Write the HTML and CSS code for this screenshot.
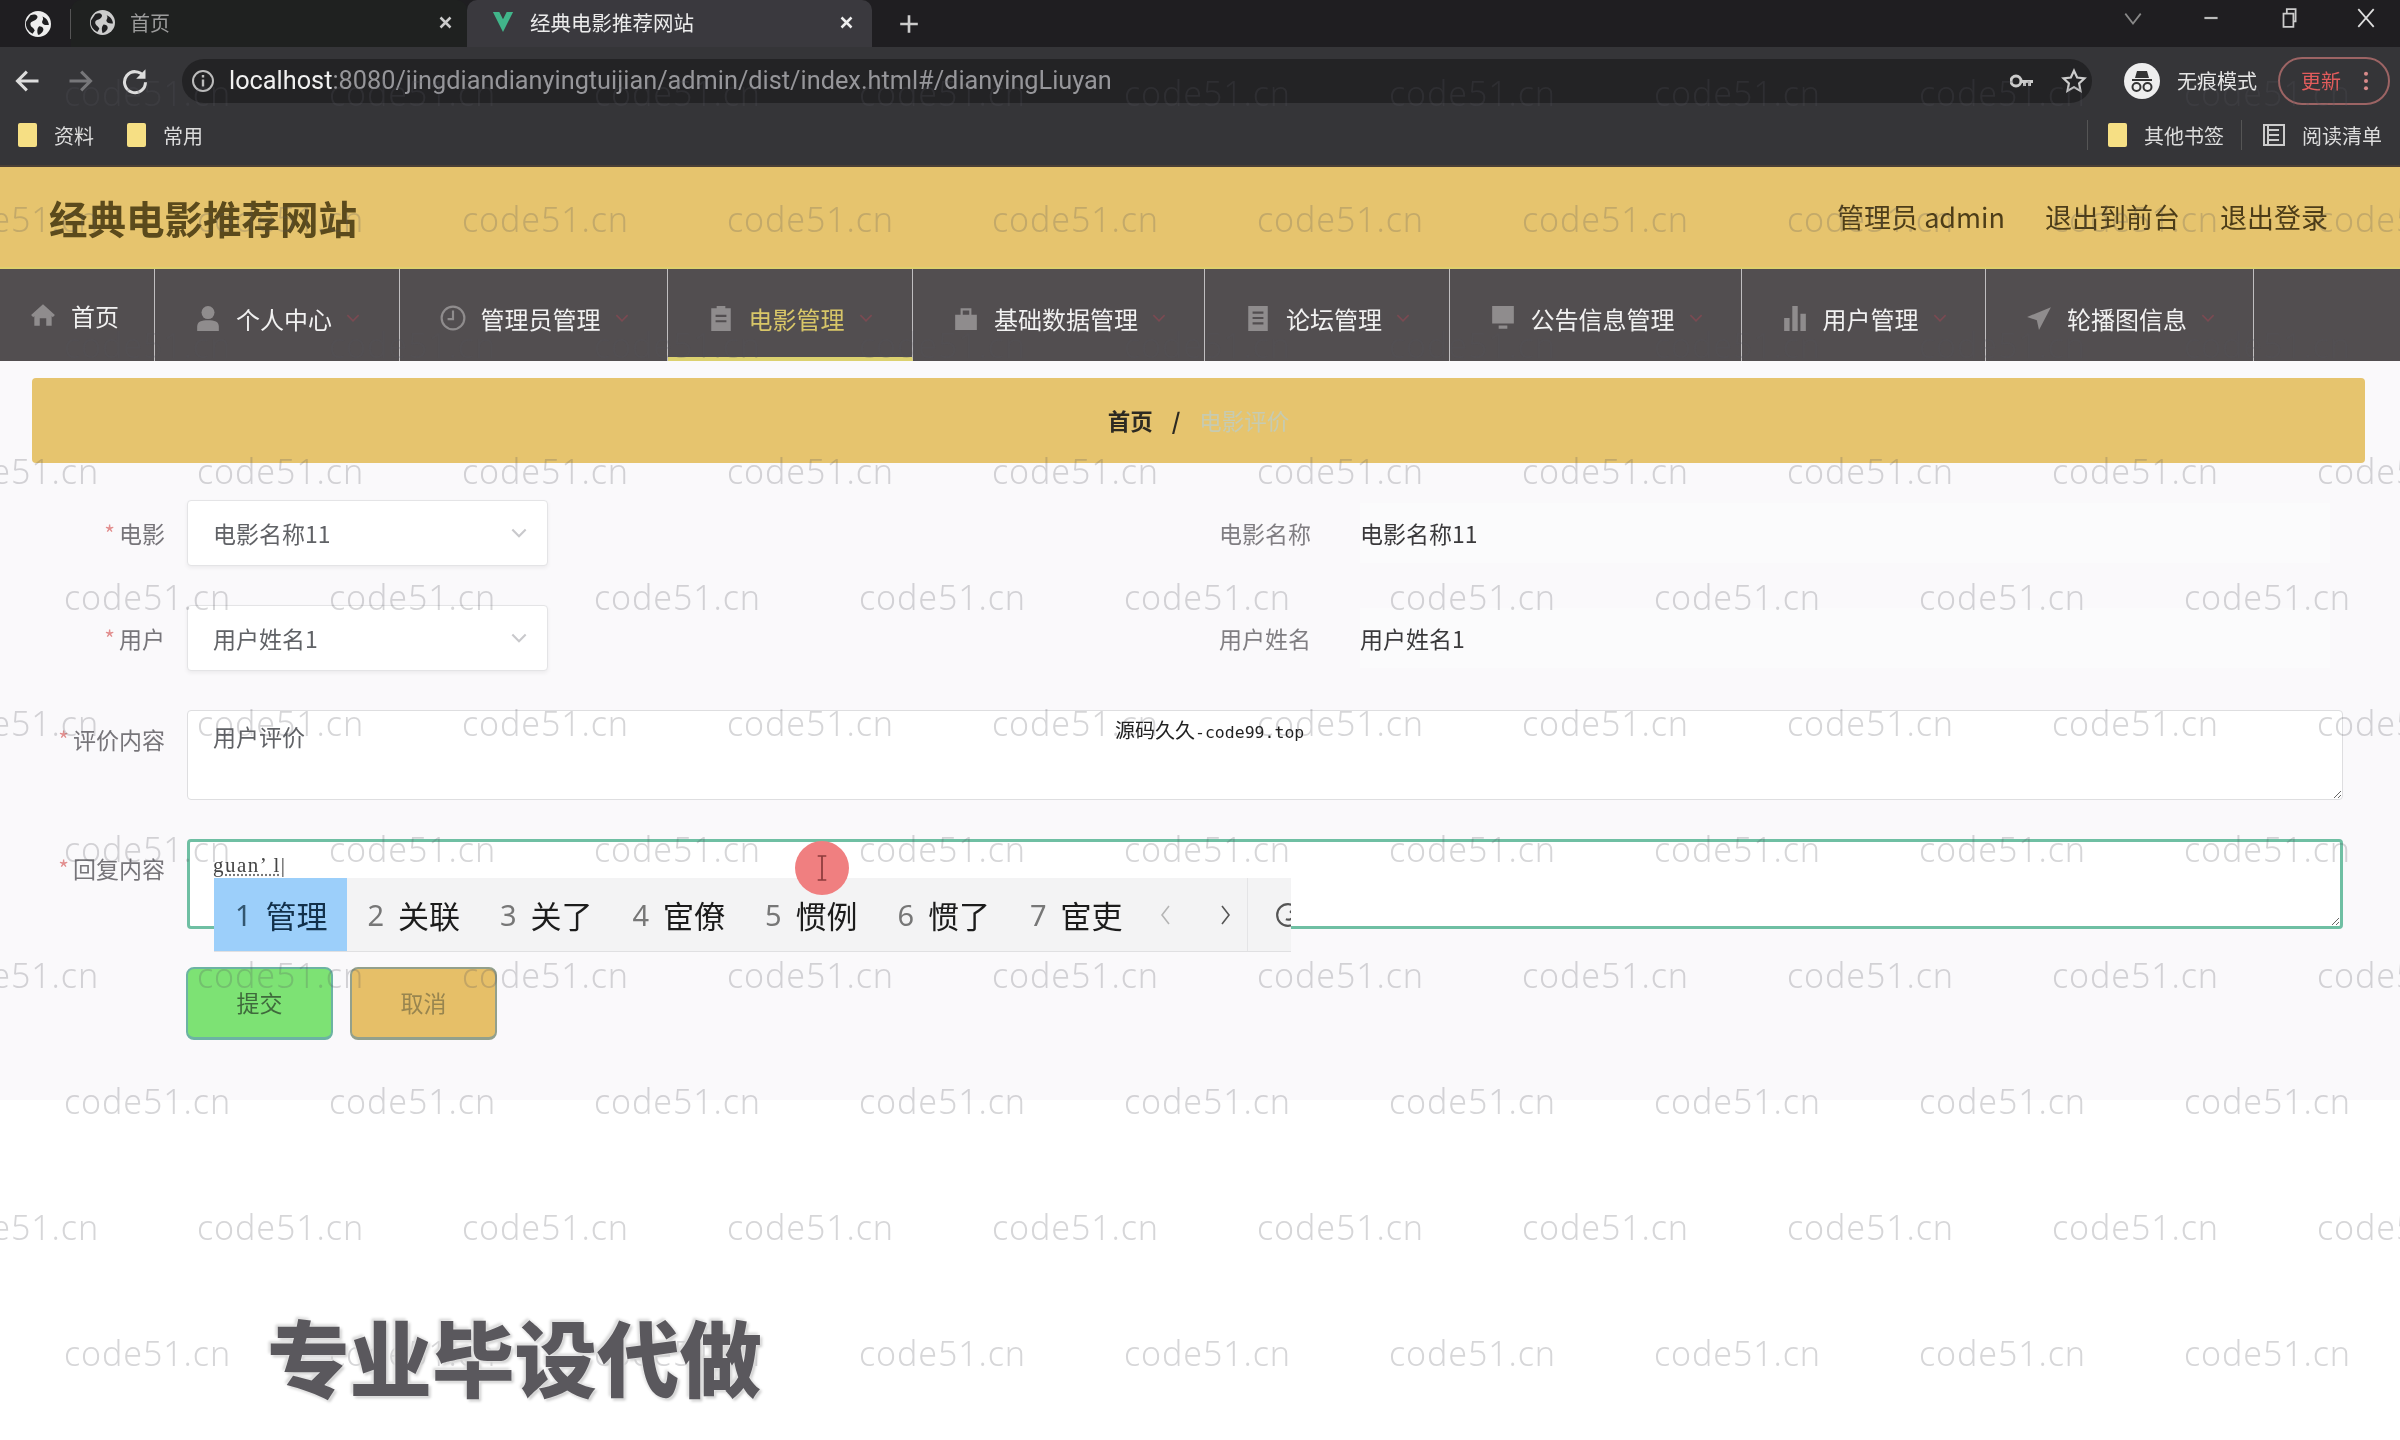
FILE: index.html
```html
<!DOCTYPE html>
<html lang="zh-CN">
<head>
<meta charset="utf-8">
<title>经典电影推荐网站</title>
<link rel="stylesheet" href="styles.css">
</head>
<body>
<div class="page">

  <!-- browser chrome -->
  <div class="tabbar">
    <svg class="globe" viewBox="0 0 24 24"><circle cx="12" cy="12" r="12" fill="#eee"/><path d="M5 4c4-2 8 0 6 3s-6 2-6 5 3 3 4 6l-2 3C3 19 0 15 1 10z M16 5c3 1 6 4 6 8-2 0-5 0-6-2s2-3 0-6z M13 14c2 0 4 1 4 3s-3 5-5 5c-1-3-1-6 1-8z" fill="#1f1f21"/></svg>
    <span class="tab-sep"></span>
    <div class="tab">
      <svg class="globe small" viewBox="0 0 24 24"><circle cx="12" cy="12" r="12" fill="#ccc"/><path d="M5 4c4-2 8 0 6 3s-6 2-6 5 3 3 4 6l-2 3C3 19 0 15 1 10z M16 5c3 1 6 4 6 8-2 0-5 0-6-2s2-3 0-6z M13 14c2 0 4 1 4 3s-3 5-5 5c-1-3-1-6 1-8z" fill="#1f1f21"/></svg>
      <span class="tab-title">首页</span>
      <svg class="tab-x" viewBox="0 0 12 12"><path d="M2 2l8 8M10 2l-8 8" stroke="#ccc" stroke-width="2"/></svg>
    </div>
    <div class="tab tab-on">
      <svg class="vlogo" viewBox="0 0 24 24"><path d="M1 1h7l4 8 4-8h7L12 23z" fill="#41b58a"/></svg>
      <span class="tab-title">经典电影推荐网站</span>
      <svg class="tab-x" viewBox="0 0 12 12"><path d="M2 2l8 8M10 2l-8 8" stroke="#eee" stroke-width="2"/></svg>
    </div>
    <svg class="tab-plus" viewBox="0 0 20 20"><path d="M10 2v16M2 10h16" stroke="#ccc" stroke-width="2.4"/></svg>
    <div class="winctl">
      <svg viewBox="0 0 20 20" class="win-down"><path d="M3 6l7 9 7-9" fill="none" stroke="#888" stroke-width="1.6"/></svg>
      <svg viewBox="0 0 20 20" class="win-min"><path d="M4 10h12" stroke="#bbb" stroke-width="2"/></svg>
      <svg viewBox="0 0 20 20" class="win-max"><path d="M5 6h9v12H5zM8 6V2h8v11h-2" fill="none" stroke="#ccc" stroke-width="1.6"/></svg>
      <svg viewBox="0 0 20 20" class="win-close"><path d="M3 2l14 16M17 2L3 18" stroke="#ddd" stroke-width="1.6"/></svg>
    </div>
  </div>

  <div class="toolbar">
    <svg class="tool tool-back" viewBox="0 0 24 24"><path d="M21 12H4M11 4l-8 8 8 8" fill="none" stroke="#ddd" stroke-width="2.6"/></svg>
    <svg class="tool tool-fwd" viewBox="0 0 24 24"><path d="M3 12h17M13 4l8 8-8 8" fill="none" stroke="#77777a" stroke-width="2.6"/></svg>
    <svg class="tool tool-reload" viewBox="0 0 24 24"><path d="M19.5 8A9 9 0 1 0 21 13" fill="none" stroke="#ddd" stroke-width="2.6"/><path d="M21 2v8h-8z" fill="#ddd"/></svg>
    <div class="urlbar">
      <svg class="url-info" viewBox="0 0 24 24"><circle cx="12" cy="12" r="10" fill="none" stroke="#bbb" stroke-width="2"/><path d="M12 10.500v7M12 6v2.400" stroke="#bbb" stroke-width="2.400"/></svg>
      <span class="url"><b>localhost</b>:8080/jingdiandianyingtuijian/admin/dist/index.html#/dianyingLiuyan</span>
      <svg class="url-key" viewBox="0 0 24 14"><circle cx="6" cy="7" r="5" fill="none" stroke="#ccc" stroke-width="3"/><path d="M11 6h12v3h-2v3h-3V9h-2v3h-3V9h-2z" fill="#ccc"/></svg>
      <svg class="url-star" viewBox="0 0 24 24"><path d="M12 2.500l2.900 6.300 6.800.8-5 4.700 1.300 6.800-6-3.400-6 3.400 1.300-6.800-5-4.700 6.800-.8z" fill="none" stroke="#ccc" stroke-width="2"/></svg>
    </div>
    <div class="incog">
      <svg viewBox="0 0 36 36"><circle cx="18" cy="18" r="18" fill="#eee"/><path d="M8 16h20v2H8zM11 15l2-7h10l2 7z" fill="#333"/><circle cx="12.500" cy="24" r="4" fill="none" stroke="#333" stroke-width="2"/><circle cx="23.500" cy="24" r="4" fill="none" stroke="#333" stroke-width="2"/></svg>
      <span>无痕模式</span>
    </div>
    <div class="update">
      <span>更新</span>
      <svg viewBox="0 0 6 24"><circle cx="3" cy="4" r="2.200" fill="#d98b8b"/><circle cx="3" cy="12" r="2.200" fill="#d98b8b"/><circle cx="3" cy="20" r="2.200" fill="#d98b8b"/></svg>
    </div>
  </div>

  <div class="bookmarks">
    <span class="folder"></span><span class="bm-text">资料</span>
    <span class="folder folder-2"></span><span class="bm-text">常用</span>
    <span class="bm-sep bm-sep-1"></span>
    <span class="folder"></span><span class="bm-text">其他书签</span>
    <span class="bm-sep"></span>
    <svg class="bm-list" viewBox="0 0 24 24"><path d="M2 2h20v20H2zM7 7h10M7 12h10M7 17h10M6 2v20" fill="none" stroke="#ccc" stroke-width="2"/></svg>
    <span class="bm-text">阅读清单</span>
  </div>

  <!-- site header -->
  <div class="header">
    <div class="site-title">经典电影推荐网站</div>
    <div class="user-links">
      <span>管理员 admin</span>
      <span>退出到前台</span>
      <span>退出登录</span>
    </div>
  </div>

  <div class="nav">
    <div class="nav-item nav-home">
      <svg class="nav-ico" viewBox="0 0 24 24"><path d="M12 2L1 12l2 2 1-1v9h5v-7h6v7h5v-9l1 1 2-2z"/></svg>
      <span>首页</span>
    </div>
    <div class="nav-item">
      <svg class="nav-ico" viewBox="0 0 24 24"><circle cx="12" cy="7" r="6"/><path d="M2 24v-4c0-5 4-6 10-6s10 1 10 6v4z"/></svg>
      <span>个人中心</span>
      <svg class="nav-arrow" viewBox="0 0 12 8"><path d="M1 1l5 5 5-5"/></svg>
    </div>
    <div class="nav-item">
      <svg class="nav-ico" viewBox="0 0 24 24"><circle cx="12" cy="12" r="10.500" fill="none" stroke="#8f8c8d" stroke-width="2"/><path d="M12 5v8H7" fill="none" stroke="#8f8c8d" stroke-width="2"/></svg>
      <span>管理员管理</span>
      <svg class="nav-arrow" viewBox="0 0 12 8"><path d="M1 1l5 5 5-5"/></svg>
    </div>
    <div class="nav-item nav-on">
      <svg class="nav-ico" viewBox="0 0 24 24"><path d="M3 3h5V1h8v2h5v21H3zM7 9v2h10V9zm0 5v2h10v-2z" fill-rule="evenodd"/></svg>
      <span>电影管理</span>
      <svg class="nav-arrow" viewBox="0 0 12 8"><path d="M1 1l5 5 5-5"/></svg>
    </div>
    <div class="nav-item">
      <svg class="nav-ico" viewBox="0 0 24 24"><path d="M2 9h20v14H2zM7 9V3h10v6h-2V5H9v4z"/></svg>
      <span>基础数据管理</span>
      <svg class="nav-arrow" viewBox="0 0 12 8"><path d="M1 1l5 5 5-5"/></svg>
    </div>
    <div class="nav-item">
      <svg class="nav-ico" viewBox="0 0 24 24"><path d="M3 1h18v23H3zM7 6v2h10V6zm0 5v2h10v-2zm0 5v2h10v-2z" fill-rule="evenodd"/></svg>
      <span>论坛管理</span>
      <svg class="nav-arrow" viewBox="0 0 12 8"><path d="M1 1l5 5 5-5"/></svg>
    </div>
    <div class="nav-item">
      <svg class="nav-ico" viewBox="0 0 24 24"><path d="M2 1h20v16H2zM8 19h8v3H8z"/></svg>
      <span>公告信息管理</span>
      <svg class="nav-arrow" viewBox="0 0 12 8"><path d="M1 1l5 5 5-5"/></svg>
    </div>
    <div class="nav-item">
      <svg class="nav-ico" viewBox="0 0 24 24"><path d="M2 12h5v12H2zM9.500 1h5v23h-5zM17 8h5v16h-5z"/></svg>
      <span>用户管理</span>
      <svg class="nav-arrow" viewBox="0 0 12 8"><path d="M1 1l5 5 5-5"/></svg>
    </div>
    <div class="nav-item">
      <svg class="nav-ico" viewBox="0 0 24 24"><path d="M23 2L1 11l9 3 2 9z"/></svg>
      <span>轮播图信息</span>
      <svg class="nav-arrow" viewBox="0 0 12 8"><path d="M1 1l5 5 5-5"/></svg>
    </div>
  </div>

  <div class="main">
    <div class="crumb">
      <b>首页</b><i>/</i><span>电影评价</span>
    </div>

    <form class="form">
      <div class="row">
        <label class="lab req">电影</label>
        <div class="sel"><span>电影名称11</span><svg viewBox="0 0 12 8"><path d="M1 1l5 5 5-5"/></svg></div>
        <span class="info-lab">电影名称</span>
        <span class="info-val">电影名称11</span>
      </div>
      <div class="row">
        <label class="lab req">用户</label>
        <div class="sel"><span>用户姓名1</span><svg viewBox="0 0 12 8"><path d="M1 1l5 5 5-5"/></svg></div>
        <span class="info-lab">用户姓名</span>
        <span class="info-val">用户姓名1</span>
      </div>
      <div class="row row-ta">
        <label class="lab req">评价内容</label>
        <textarea class="ta" readonly>用户评价</textarea>
      </div>
      <div class="row row-ta">
        <label class="lab req">回复内容</label>
        <textarea class="ta ta-reply" readonly>guan’ l|</textarea>
      </div>
      <div class="btns">
        <button type="button" class="btn btn-ok">提交</button>
        <button type="button" class="btn btn-no">取消</button>
      </div>
    </form>
  </div>

  <div class="bottom"></div>

  <!-- watermark tiles across the whole frame -->
  <div class="marks">
    <div class="mark-b">code51.cn code51.cn code51.cn code51.cn code51.cn code51.cn code51.cn code51.cn code51.cn code51.cn</div>
    <div class="mark-a">code51.cn code51.cn code51.cn code51.cn code51.cn code51.cn code51.cn code51.cn code51.cn code51.cn</div>
    <div class="mark-b">code51.cn code51.cn code51.cn code51.cn code51.cn code51.cn code51.cn code51.cn code51.cn code51.cn</div>
    <div class="mark-a">code51.cn code51.cn code51.cn code51.cn code51.cn code51.cn code51.cn code51.cn code51.cn code51.cn</div>
    <div class="mark-b">code51.cn code51.cn code51.cn code51.cn code51.cn code51.cn code51.cn code51.cn code51.cn code51.cn</div>
    <div class="mark-a">code51.cn code51.cn code51.cn code51.cn code51.cn code51.cn code51.cn code51.cn code51.cn code51.cn</div>
    <div class="mark-b">code51.cn code51.cn code51.cn code51.cn code51.cn code51.cn code51.cn code51.cn code51.cn code51.cn</div>
    <div class="mark-a">code51.cn code51.cn code51.cn code51.cn code51.cn code51.cn code51.cn code51.cn code51.cn code51.cn</div>
    <div class="mark-b">code51.cn code51.cn code51.cn code51.cn code51.cn code51.cn code51.cn code51.cn code51.cn code51.cn</div>
    <div class="mark-a">code51.cn code51.cn code51.cn code51.cn code51.cn code51.cn code51.cn code51.cn code51.cn code51.cn</div>
    <div class="mark-b">code51.cn code51.cn code51.cn code51.cn code51.cn code51.cn code51.cn code51.cn code51.cn code51.cn</div>
  </div>

  <!-- things that sit over the page -->
  <div class="ime">
    <div class="ime-item ime-on"><em>1</em>管理</div>
    <div class="ime-item"><em>2</em>关联</div>
    <div class="ime-item"><em>3</em>关了</div>
    <div class="ime-item"><em>4</em>宦僚</div>
    <div class="ime-item"><em>5</em>惯例</div>
    <div class="ime-item"><em>6</em>惯了</div>
    <div class="ime-item"><em>7</em>宦吏</div>
    <svg class="ime-arrow" viewBox="0 0 12 24"><path d="M10 3L3 12l7 9" fill="none" stroke="#b5b5b5" stroke-width="1.600"/></svg>
    <svg class="ime-arrow ime-next" viewBox="0 0 12 24"><path d="M2 3l7 9-7 9" fill="none" stroke="#555" stroke-width="1.600"/></svg>
    <span class="ime-sep"></span>
    <svg class="ime-smile" viewBox="0 0 24 24"><circle cx="12" cy="12" r="10" fill="none" stroke="#555" stroke-width="2"/><circle cx="15" cy="9" r="1.500" fill="#555"/><path d="M10 16c3 1 5 0 7-2" fill="none" stroke="#555" stroke-width="2"/></svg>
  </div>

  <div class="mouse">
    <svg viewBox="0 0 14 32"><path d="M2 2h10M7 2v28M2 30h10" fill="none" stroke="#8c3b3b" stroke-width="2"/></svg>
  </div>

  <div class="note">源码久久<span>-code99.top</span></div>
  <div class="bigtext">专业毕设代做</div>
</div>
</body>
</html>
```

FILE: styles.css
```css
* { box-sizing: border-box; }

html, body {
  margin: 0;
  padding: 0;
  background: #fff;
}

.page {
  position: relative;
  width: 2400px;
  height: 1440px;
  overflow: hidden;
  font-family: "Noto Sans CJK SC", "Liberation Sans", sans-serif;
  filter: blur(0.7px);
}

/* browser chrome */
.tabbar {
  display: flex;
  align-items: center;
  height: 47px;
  background: #1f1e21;
  color: #ccc;
  font-size: 20px;
}

.globe { width: 26px; height: 26px; margin-left: 25px; flex: none; }
.globe.small { width: 25px; height: 25px; margin-left: 19px; }
.tab-sep { width: 1px; height: 30px; background: #555; margin-left: 19px; }

.tab {
  display: flex;
  align-items: center;
  width: 396px;
  height: 47px;
  padding-bottom: 3px;
  background: #1f2120;
  border-radius: 10px 10px 0 0;
  color: #9c9c9c;
}
.tab-title { margin-left: 15px; }
.tab-x { width: 15px; height: 15px; margin-left: auto; margin-right: 14px; }

.tab-on {
  width: 405px;
  background: #3a393e;
  color: #ececec;
}
.vlogo { width: 22px; height: 22px; margin-left: 25px; }
.tab-on .tab-title { margin-left: 16px; font-size: 20.500px; }
.tab-on .tab-x { margin-right: 18px; }

.tab-plus { width: 22px; height: 22px; margin-left: 26px; }

.winctl {
  display: flex;
  align-items: center;
  margin-left: auto;
  height: 47px;
  padding-bottom: 12px;
}
.winctl svg { width: 22px; height: 22px; }
.win-down { margin-right: 56px; }
.win-min { margin-right: 56px; }
.win-max { margin-right: 55px; }
.win-close { margin-right: 23px; }

.toolbar {
  display: flex;
  align-items: center;
  height: 63px;
  padding-top: 4px;
  background: #353538;
}
.tool { width: 28px; height: 28px; flex: none; }
.tool-back { margin-left: 14px; }
.tool-fwd { margin-left: 24px; }
.tool-reload { margin-left: 27px; }

.urlbar {
  display: flex;
  align-items: center;
  width: 1910px;
  height: 44px;
  margin-left: 33px;
  padding: 0 0 0 9px;
  background: #232325;
  border-radius: 22px;
}
.url-info { width: 24px; height: 24px; flex: none; }
.url {
  margin-left: 14px;
  font-family: Roboto, "Liberation Sans", sans-serif;
  font-size: 25.300px;
  color: #96969a;
  white-space: nowrap;
}
.url b { font-weight: 400; color: #f0f0f0; }
.url-key { width: 24px; height: 14px; margin-left: auto; }
.url-star { width: 26px; height: 26px; margin-left: 27px; margin-right: 5px; }

.incog {
  display: flex;
  align-items: center;
  gap: 17px;
  width: 186px;
  height: 44px;
  margin-left: 13px;
  color: #e6e6e6;
  font-size: 20px;
}
.incog svg { width: 36px; height: 36px; margin-left: 19px; }

.update {
  display: flex;
  align-items: center;
  width: 112px;
  height: 48px;
  margin-left: -13px;
  padding-left: 21px;
  border: 2px solid #9c6464;
  border-radius: 24px;
  color: #e25c5c;
  font-size: 20px;
}
.update svg { width: 6px; height: 22px; margin-left: 22px; }

.bookmarks {
  display: flex;
  align-items: center;
  height: 57px;
  padding: 0 18px 5px 18px;
  background: #353538;
  color: #dcdcdc;
  font-size: 20px;
  border-bottom: 2px solid #4a3f36;
}
.folder {
  width: 19px;
  height: 24px;
  background: #f6df84;
  border-radius: 2px;
}
.folder-2 { margin-left: 33px; }
.bm-text { margin-left: 17px; }
.bm-sep { width: 1px; height: 30px; background: #555; margin: 0 20px 0 17px; }
.bm-sep-1 { margin-left: auto; }
.bm-list { width: 24px; height: 24px; margin-right: -1px; }

/* site header */
.header {
  display: flex;
  align-items: center;
  justify-content: space-between;
  height: 102px;
  padding: 0 72px 0 49px;
  background: #e6c46e;
  border-bottom: 2px solid #dfd06e;
}
.site-title {
  font-size: 38.500px;
  font-weight: 700;
  color: #5b4a1c;
}
.user-links {
  display: flex;
  gap: 40px;
  font-size: 27px;
  color: #4d3d18;
  margin-top: -2px;
}

.nav {
  display: flex;
  height: 92px;
  background: #524e50;
  color: #f1f1f1;
  font-size: 24px;
}
.nav-item {
  display: flex;
  align-items: center;
  padding: 6px 0 0 40px;
  height: 92px;
  width: 244.500px;
  border-right: 1px solid #c0bec0;
  position: relative;
}
.nav-item:nth-child(3), .nav-item:nth-child(9) { width: 268px; }
.nav-item:nth-child(5), .nav-item:nth-child(7) { width: 292px; }
.nav-home { width: 155px; padding-left: 30px; padding-top: 0; }
.nav-ico { width: 26px; height: 28px; margin-right: 15px; fill: #8f8c8d; flex: none; }
.nav-arrow { width: 14px; height: 9px; margin-left: 14px; fill: none; stroke: #7a4a52; stroke-width: 1.500; }
.nav-on {
  width: 245.500px;
  padding-top: 10px;
  color: #d8c668;
  border-bottom: 4px solid #dcd16f;
}

/* content */
.main {
  height: 739px;
  padding-top: 17px;
  background: #faf9fb;
}
.crumb {
  display: flex;
  align-items: center;
  justify-content: center;
  width: 2333px;
  height: 85px;
  margin-left: 32px;
  padding-bottom: 2px;
  background: #e6c46e;
  border-radius: 4px;
  font-size: 22.500px;
  color: #2d2a22;
}
.crumb b { font-weight: 700; }
.crumb i { margin: 0 19px; font-style: normal; font-weight: 700; }
.crumb span { color: #c6cbb2; }

.form {
  display: flex;
  flex-direction: column;
  gap: 39px;
  margin-top: 37px;
  font-size: 23px;
}
.row {
  display: flex;
  align-items: center;
  height: 66px;
}
.row-ta { height: 90px; align-items: flex-start; }
.lab {
  width: 165px;
  margin-right: 22px;
  text-align: right;
  color: #77757a;
  flex: none;
}
.row-ta .lab { padding-top: 12px; }
.lab.req::before {
  content: "*";
  margin-right: 4px;
  color: #e28f8f;
  font-size: 23px;
}

.sel {
  display: flex;
  align-items: center;
  justify-content: space-between;
  width: 361px;
  height: 66px;
  padding: 0 20px 0 25px;
  background: #fff;
  border: 1px solid #e4e4e6;
  border-radius: 4px;
  box-shadow: 0 2px 4px rgba(0, 0, 0, 0.06);
  color: #606266;
}
.sel svg { width: 16px; height: 11px; fill: none; stroke: #c9c9cc; stroke-width: 1.600; }

.info-lab {
  margin-left: 671px;
  width: 93px;
  white-space: nowrap;
  font-size: 23px;
  color: #807e82;
}
.info-val {
  display: flex;
  align-items: center;
  width: 970px;
  height: 60px;
  margin-left: 48px;
  background: #fbfbfc;
  color: #3a393b;
}

.ta {
  display: block;
  width: 2156px;
  height: 90px;
  padding: 8px 25px;
  background: #fff;
  border: 1px solid #dedee0;
  border-radius: 4px;
  outline: none;
  font-family: inherit;
  font-size: 23px;
  color: #606266;
}
.ta-reply {
  border: 3px solid #6fbfa3;
  padding: 11px 23px;
  font-family: "Liberation Serif", serif;
  font-size: 21px;
  letter-spacing: 1.500px;
  color: #444;
  text-decoration: underline dotted #777;
}

.btns {
  display: flex;
  gap: 17px;
  margin-top: -1px;
  margin-left: 186px;
}
.btn {
  width: 147px;
  height: 73px;
  padding-bottom: 3px;
  border-radius: 8px;
  font-family: inherit;
  font-size: 23px;
}
.btn-ok {
  background: #7de274;
  border: 2px solid #6cb3a3;
  border-bottom-width: 3px;
  color: #3f6a3c;
}
.btn-no {
  background: #e6bf68;
  border: 2px solid #93a08c;
  border-bottom-width: 3px;
  color: #98854f;
}

.bottom { height: 340px; background: #fff; }

/* watermark */
.marks {
  position: absolute;
  left: 0;
  top: 30px;
  width: 2400px;
  pointer-events: none;
  font-family: "Noto Sans", sans-serif;
  font-weight: 300;
  font-size: 34px;
  letter-spacing: 0.900px;
  word-spacing: 88.200px;
  color: rgba(85, 85, 90, 0.24);
  white-space: nowrap;
}
.mark-a, .mark-b { height: 126px; line-height: 126px; }
.mark-a { margin-left: -68px; }
.mark-b { margin-left: 64px; }

/* pinyin candidate box */
.ime {
  position: absolute;
  left: 214px;
  top: 878px;
  display: flex;
  align-items: center;
  width: 1077px;
  height: 74px;
  background: #f3f3f4;
  border-bottom: 1px solid #e0e0e2;
  color: #1c1c1c;
  font-size: 31px;
  overflow: hidden;
}
.ime-item {
  display: flex;
  align-items: center;
  gap: 14px;
  width: 132.500px;
  height: 74px;
  padding-left: 21px;
  flex: none;
  white-space: nowrap;
}
.ime-item em { font-style: normal; font-size: 29px; color: #777; font-family: "Noto Sans", sans-serif; }
.ime-on { background: #9ccffa; color: #12304a; }
.ime-on em { color: #33566f; }
.ime-arrow { width: 12px; height: 24px; margin-left: 17px; flex: none; }
.ime-next { margin-left: 49px; }
.ime-sep { width: 1px; height: 74px; background: #e4e4e6; margin-left: 15px; flex: none; }
.ime-smile { width: 26px; height: 26px; margin-left: 27px; flex: none; }

.mouse {
  position: absolute;
  left: 795px;
  top: 841px;
  display: flex;
  align-items: center;
  justify-content: center;
  width: 54px;
  height: 54px;
  background: #f07f80;
  border-radius: 50%;
}
.mouse svg { width: 12px; height: 30px; }

.note {
  position: absolute;
  left: 1115px;
  top: 716px;
  font-size: 20px;
  line-height: 28px;
  color: #222;
  white-space: nowrap;
}
.note span { font-family: "DejaVu Sans Mono", monospace; font-size: 16.500px; }

.bigtext {
  position: absolute;
  left: 267px;
  top: 1299px;
  font-size: 82.500px;
  line-height: 112px;
  font-weight: 900;
  color: #5a585d;
  white-space: nowrap;
  text-shadow: 0 0 3px #fff, 2px 2px 3px #c4c4c4, -2px -2px 3px #d0d0d0;
}
```
